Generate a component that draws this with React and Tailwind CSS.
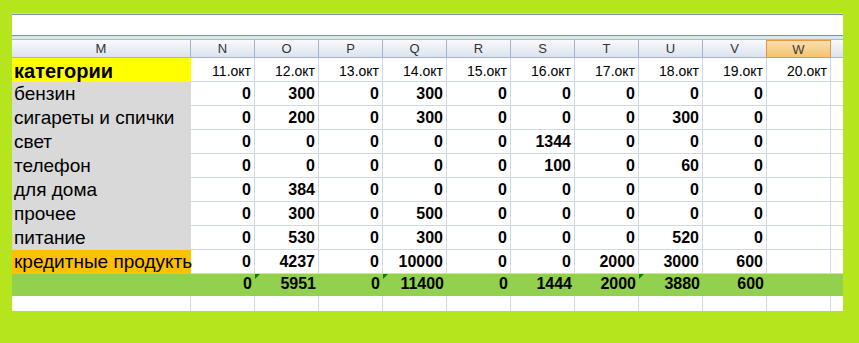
import React from "react";

const grid = "grid grid-cols-[179px_repeat(10,64px)_1fr]";
const letters = ["M", "N", "O", "P", "Q", "R", "S", "T", "U", "V", "W"];
const dates = ["11", "12", "13", "14", "15", "16", "17", "18", "19", "20"];

const rows = [
  { name: "бензин", vals: [0, 300, 0, 300, 0, 0, 0, 0, 0] },
  { name: "сигареты и спички", vals: [0, 200, 0, 300, 0, 0, 0, 300, 0] },
  { name: "свет", vals: [0, 0, 0, 0, 0, 1344, 0, 0, 0] },
  { name: "телефон", vals: [0, 0, 0, 0, 0, 100, 0, 60, 0] },
  { name: "для дома", vals: [0, 384, 0, 0, 0, 0, 0, 0, 0] },
  { name: "прочее", vals: [0, 300, 0, 500, 0, 0, 0, 0, 0] },
  { name: "питание", vals: [0, 530, 0, 300, 0, 0, 0, 520, 0] },
  { name: "кредитные продукть", vals: [0, 4237, 0, 10000, 0, 0, 2000, 3000, 600], orange: true },
];

const totals = [0, 5951, 0, 11400, 0, 1444, 2000, 3880, 600];
const flagged = [1, 3, 7];

function Cell({ children }) {
  return (
    <div className="flex h-[24px] items-end justify-end border-r border-b border-[#d0d7e5] pr-[3px] pb-[3px] text-[16px] leading-none font-bold text-black">
      {children}
    </div>
  );
}

export default function App() {
  return (
    <div className="h-[343px] w-[859px] bg-[#b5e61d] pt-[13px] pl-[12px] font-['Liberation_Sans',Arial,sans-serif]">
      <div className="w-[831px] bg-white">
        <div className="h-px bg-[#c5d5ea]" />
        <div className="h-px bg-[#7393bb]" />
        <div className="h-[20px]" />
        <div className="h-px bg-[#7393bb]" />
        <div className="h-[3px] bg-[#dbe5f1]" />
        <div className="h-px bg-[#a9bcd5]" />

        <div className={grid}>
          {letters.map((l) =>
            l === "W" ? (
              <div
                key={l}
                className="-ml-px flex h-[18px] items-center justify-center border border-[#f29436] bg-linear-to-b from-[#f9dfae] to-[#f3c46e] text-[13px] leading-none text-[#3b3b3b]"
              >
                {l}
              </div>
            ) : (
              <div
                key={l}
                className="flex h-[18px] items-center justify-center border-r border-b border-[#9eb6ce] bg-linear-to-b from-[#f8fafd] to-[#dce3ee] text-[13px] leading-none text-[#333]"
              >
                {l}
              </div>
            )
          )}
          <div className="h-[18px] border-b border-[#9eb6ce] bg-linear-to-b from-[#f8fafd] to-[#dce3ee]" />
        </div>

        <div className={grid}>
          <div className="flex h-[24px] items-end bg-[#ffff00] pb-px pl-[2px] text-[20px] leading-none font-bold text-black">
            категории
          </div>
          {dates.map((d) => (
            <div
              key={d}
              className="flex h-[24px] items-end justify-end border-r border-b border-[#d0d7e5] pr-[3px] pb-[3px] text-[14px] leading-none text-black"
            >
              {d}.окт
            </div>
          ))}
          <div className="h-[24px] border-b border-[#d0d7e5]" />
        </div>

        {rows.map((r) => (
          <div key={r.name} className={grid}>
            <div
              className={
                "flex h-[24px] items-end pb-[3px] pl-[2px] text-[19px] leading-none whitespace-nowrap text-black " +
                (r.orange ? "bg-[#ffc000]" : "bg-[#d9d9d9]")
              }
            >
              {r.name}
            </div>
            {r.vals.map((v, i) => (
              <Cell key={i}>{v}</Cell>
            ))}
            <Cell />
            <div className="h-[24px] border-b border-[#d0d7e5]" />
          </div>
        ))}

        <div className={grid + " h-[22px] bg-[#92d050]"}>
          <div />
          {totals.map((v, i) => (
            <div
              key={i}
              className="relative flex items-end justify-end pr-[3px] pb-[4px] text-[16px] leading-none font-bold text-black"
            >
              {flagged.includes(i + 1) && (
                <span className="absolute top-0 left-[64px] h-0 w-0 border-t-[5px] border-r-[5px] border-t-[#008000] border-r-transparent" />
              )}
              {v}
            </div>
          ))}
          <div />
          <div />
        </div>

        <div className={grid + " h-[15px]"}>
          {letters.map((l) => (
            <div key={l} className="border-r border-[#d0d7e5]" />
          ))}
          <div />
        </div>
      </div>
    </div>
  );
}
